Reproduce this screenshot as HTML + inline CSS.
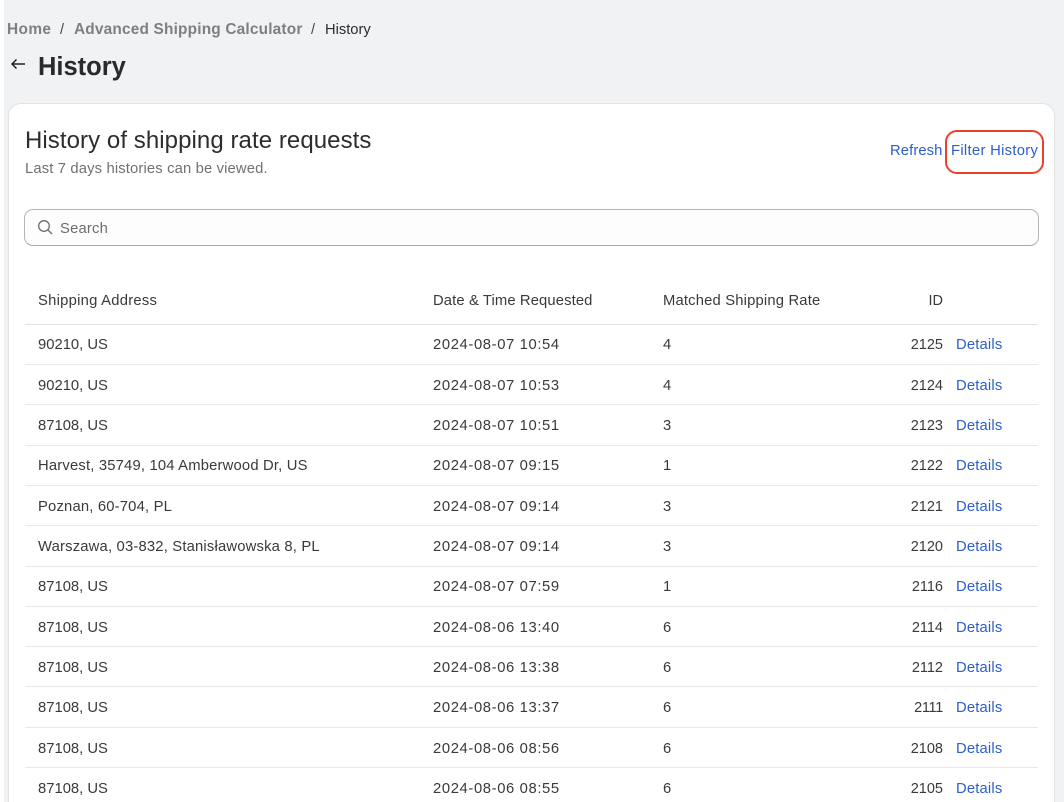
<!DOCTYPE html>
<html><head><meta charset="utf-8"><style>
html,body{margin:0;padding:0;width:1064px;height:802px;overflow:hidden;background:#fff;font-family:"Liberation Sans",sans-serif}
#w{position:absolute;left:0;top:0;width:1064px;height:802px;overflow:hidden}
#bg{position:absolute;left:4px;top:0;width:1060px;height:802px;background:#f1f2f4}
#card{position:absolute;left:8px;top:103px;width:1047px;height:720px;background:#fff;border:1px solid #e3e3e3;border-radius:13px;box-sizing:border-box}
.t{position:absolute;white-space:nowrap;line-height:20px;font-size:14.8px;letter-spacing:0;color:#3a3a3a}
.l{color:#2c5ecb}
.r{text-align:right;right:121px;font-size:14.5px}
.d{left:433px;letter-spacing:.62px}
.a{left:38px}
.a2{left:38px;letter-spacing:.18px}
.m{left:663px}
.k{left:956px;letter-spacing:.17px}
.b{position:absolute;left:25px;width:1013px;height:1px;background:#e8e8e8}
</style></head><body><div id="w">
<div id="bg"></div>
<div class="t" style="left:7px;top:20px;font-size:15.4px;font-weight:bold;color:#7d7f82;letter-spacing:.4px">Home</div>
<div class="t" style="left:60px;top:20px;font-size:14.5px;color:#444">/</div>
<div class="t" style="left:74px;top:20px;font-size:15.4px;font-weight:bold;color:#7d7f82;letter-spacing:.19px">Advanced Shipping Calculator</div>
<div class="t" style="left:311px;top:20px;font-size:14.5px;color:#444">/</div>
<div class="t" style="left:325px;top:20px;font-size:14.7px;color:#2c2c2c">History</div>
<svg style="position:absolute;left:10px;top:57px" width="16" height="14" viewBox="0 0 16 14"><path d="M15 7H2M6.500 2.500L2 7l4.500 4.500" fill="none" stroke="#222" stroke-width="1.500"/></svg>
<div class="t" style="left:38px;top:51px;line-height:32px;font-size:25.5px;font-weight:bold;color:#2a2a2a">History</div>
<div id="card"></div>
<div class="t" style="left:25px;top:126px;line-height:30px;font-size:24px;color:#2d2d2d;letter-spacing:.07px">History of shipping rate requests</div>
<div class="t" style="left:25px;top:159px;color:#717171;letter-spacing:.14px">Last 7 days histories can be viewed.</div>
<div class="t l" style="left:890px;top:141px;letter-spacing:.1px">Refresh</div>
<div class="t l" style="left:951px;top:141px;letter-spacing:.3px">Filter History</div>
<div style="position:absolute;left:945px;top:130px;width:99px;height:44px;box-sizing:border-box;border:2.500px solid #e8432a;border-radius:12px"></div>
<div style="position:absolute;left:24px;top:209px;width:1015px;height:37px;box-sizing:border-box;background:#fdfdfd;border:1px solid #b5b5b5;border-bottom-color:#a8a8a8;border-radius:9px"></div>
<svg style="position:absolute;left:37px;top:219px" width="16" height="16" viewBox="0 0 16 16"><circle cx="7" cy="7" r="5.300" fill="none" stroke="#6e6e6e" stroke-width="1.300"/><path d="M11 11l4 4" stroke="#6e6e6e" stroke-width="1.300" fill="none"/></svg>
<div class="t" style="left:60px;top:219px;color:#6d6d6d;letter-spacing:.2px">Search</div>
<div class="t" style="left:38px;top:291px;letter-spacing:.25px">Shipping Address</div>
<div class="t" style="left:433px;top:291px;letter-spacing:.115px">Date &amp; Time Requested</div>
<div class="t" style="left:663px;top:291px;letter-spacing:.17px">Matched Shipping Rate</div>
<div class="t r" style="top:291px">ID</div>
<div class="b" style="top:324px;background:#e2e2e2"></div>
<div class="b" style="top:364px"></div>
<div class="b" style="top:404px"></div>
<div class="b" style="top:445px"></div>
<div class="b" style="top:485px"></div>
<div class="b" style="top:525px"></div>
<div class="b" style="top:566px"></div>
<div class="b" style="top:606px"></div>
<div class="b" style="top:646px"></div>
<div class="b" style="top:686px"></div>
<div class="b" style="top:727px"></div>
<div class="b" style="top:767px"></div>

<div class="t a" style="top:335px">90210, US</div><div class="t d" style="top:335px">2024-08-07 10:54</div><div class="t m" style="top:335px">4</div><div class="t r" style="top:335px">2125</div><div class="t l k" style="top:335px">Details</div>
<div class="t a" style="top:376px">90210, US</div><div class="t d" style="top:376px">2024-08-07 10:53</div><div class="t m" style="top:376px">4</div><div class="t r" style="top:376px">2124</div><div class="t l k" style="top:376px">Details</div>
<div class="t a" style="top:416px">87108, US</div><div class="t d" style="top:416px">2024-08-07 10:51</div><div class="t m" style="top:416px">3</div><div class="t r" style="top:416px">2123</div><div class="t l k" style="top:416px">Details</div>
<div class="t a2" style="top:456px">Harvest, 35749, 104 Amberwood Dr, US</div><div class="t d" style="top:456px">2024-08-07 09:15</div><div class="t m" style="top:456px">1</div><div class="t r" style="top:456px">2122</div><div class="t l k" style="top:456px">Details</div>
<div class="t a2" style="top:497px">Poznan, 60-704, PL</div><div class="t d" style="top:497px">2024-08-07 09:14</div><div class="t m" style="top:497px">3</div><div class="t r" style="top:497px">2121</div><div class="t l k" style="top:497px">Details</div>
<div class="t a2" style="top:537px">Warszawa, 03-832, Stanisławowska 8, PL</div><div class="t d" style="top:537px">2024-08-07 09:14</div><div class="t m" style="top:537px">3</div><div class="t r" style="top:537px">2120</div><div class="t l k" style="top:537px">Details</div>
<div class="t a" style="top:577px">87108, US</div><div class="t d" style="top:577px">2024-08-07 07:59</div><div class="t m" style="top:577px">1</div><div class="t r" style="top:577px">2116</div><div class="t l k" style="top:577px">Details</div>
<div class="t a" style="top:618px">87108, US</div><div class="t d" style="top:618px">2024-08-06 13:40</div><div class="t m" style="top:618px">6</div><div class="t r" style="top:618px">2114</div><div class="t l k" style="top:618px">Details</div>
<div class="t a" style="top:658px">87108, US</div><div class="t d" style="top:658px">2024-08-06 13:38</div><div class="t m" style="top:658px">6</div><div class="t r" style="top:658px">2112</div><div class="t l k" style="top:658px">Details</div>
<div class="t a" style="top:698px">87108, US</div><div class="t d" style="top:698px">2024-08-06 13:37</div><div class="t m" style="top:698px">6</div><div class="t r" style="top:698px;letter-spacing:-.3px">2111</div><div class="t l k" style="top:698px">Details</div>
<div class="t a" style="top:739px">87108, US</div><div class="t d" style="top:739px">2024-08-06 08:56</div><div class="t m" style="top:739px">6</div><div class="t r" style="top:739px">2108</div><div class="t l k" style="top:739px">Details</div>
<div class="t a" style="top:779px">87108, US</div><div class="t d" style="top:779px">2024-08-06 08:55</div><div class="t m" style="top:779px">6</div><div class="t r" style="top:779px">2105</div><div class="t l k" style="top:779px">Details</div>
</div></body></html>
